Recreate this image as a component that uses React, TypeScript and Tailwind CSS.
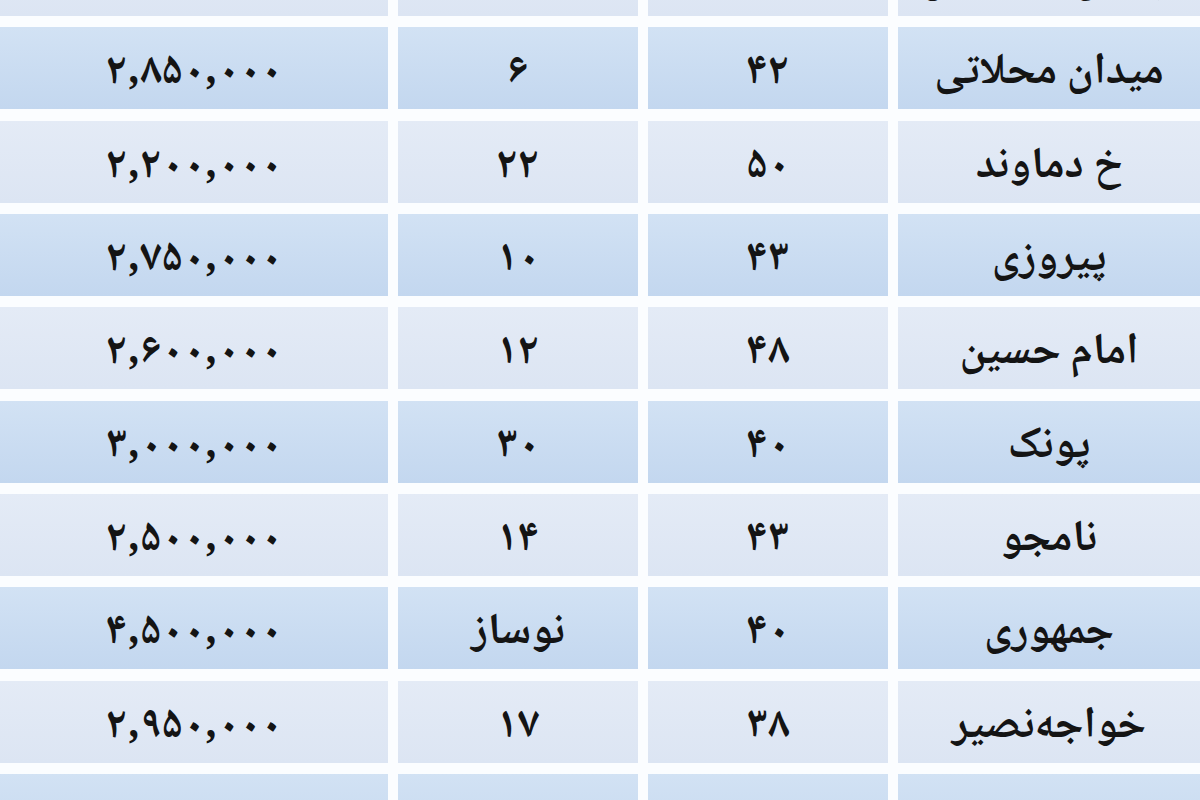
import React from 'react';

type Row = { price: string; units: string; area: string; name: string };

const rows: Row[] = [
  { price: '۲,۷۰۰,۰۰۰', units: '۱۵', area: '۴۵', name: 'ابتدای ستارخان' },
  { price: '۲,۸۵۰,۰۰۰', units: '۶', area: '۴۲', name: 'میدان محلاتی' },
  { price: '۲,۲۰۰,۰۰۰', units: '۲۲', area: '۵۰', name: 'خ دماوند' },
  { price: '۲,۷۵۰,۰۰۰', units: '۱۰', area: '۴۳', name: 'پیروزی' },
  { price: '۲,۶۰۰,۰۰۰', units: '۱۲', area: '۴۸', name: 'امام حسین' },
  { price: '۳,۰۰۰,۰۰۰', units: '۳۰', area: '۴۰', name: 'پونک' },
  { price: '۲,۵۰۰,۰۰۰', units: '۱۴', area: '۴۳', name: 'نامجو' },
  { price: '۴,۵۰۰,۰۰۰', units: 'نوساز', area: '۴۰', name: 'جمهوری' },
  { price: '۲,۹۵۰,۰۰۰', units: '۱۷', area: '۳۸', name: 'خواجه‌نصیر' },
  { price: '۲,۴۰۰,۰۰۰', units: '۲۰', area: '۴۵', name: 'تهرانپارس' },
];

function Cell({ children, dark }: { children: React.ReactNode; dark: boolean }) {
  return (
    <div
      className={
        dark
          ? 'flex items-center justify-center pt-[12px] bg-gradient-to-b from-[#d2e2f4] to-[#c3d7ef]'
          : 'flex items-center justify-center pt-[12px] bg-gradient-to-b from-[#e4ebf6] to-[#dce5f3]'
      }
    >
      {children}
    </div>
  );
}

export default function App() {
  return (
    <div className="h-[800px] w-[1200px] overflow-hidden bg-[#fbfdff]">
      <div
        dir="rtl"
        className="mt-[-66px] flex flex-col gap-y-[11.33px] font-['Noto_Naskh_Arabic','DejaVu_Sans',sans-serif] text-[44px] leading-none font-bold text-[#141414]"
      >
        {rows.map((r, i) => {
          const dark = i % 2 === 1;
          return (
            <div key={i} className="grid h-[82px] grid-cols-[302px_240px_240px_388px] gap-x-[10px]">
              <Cell dark={dark}>{r.name}</Cell>
              <Cell dark={dark}>{r.area}</Cell>
              <Cell dark={dark}>{r.units}</Cell>
              <Cell dark={dark}>
                <span dir="ltr">{r.price}</span>
              </Cell>
            </div>
          );
        })}
      </div>
    </div>
  );
}
